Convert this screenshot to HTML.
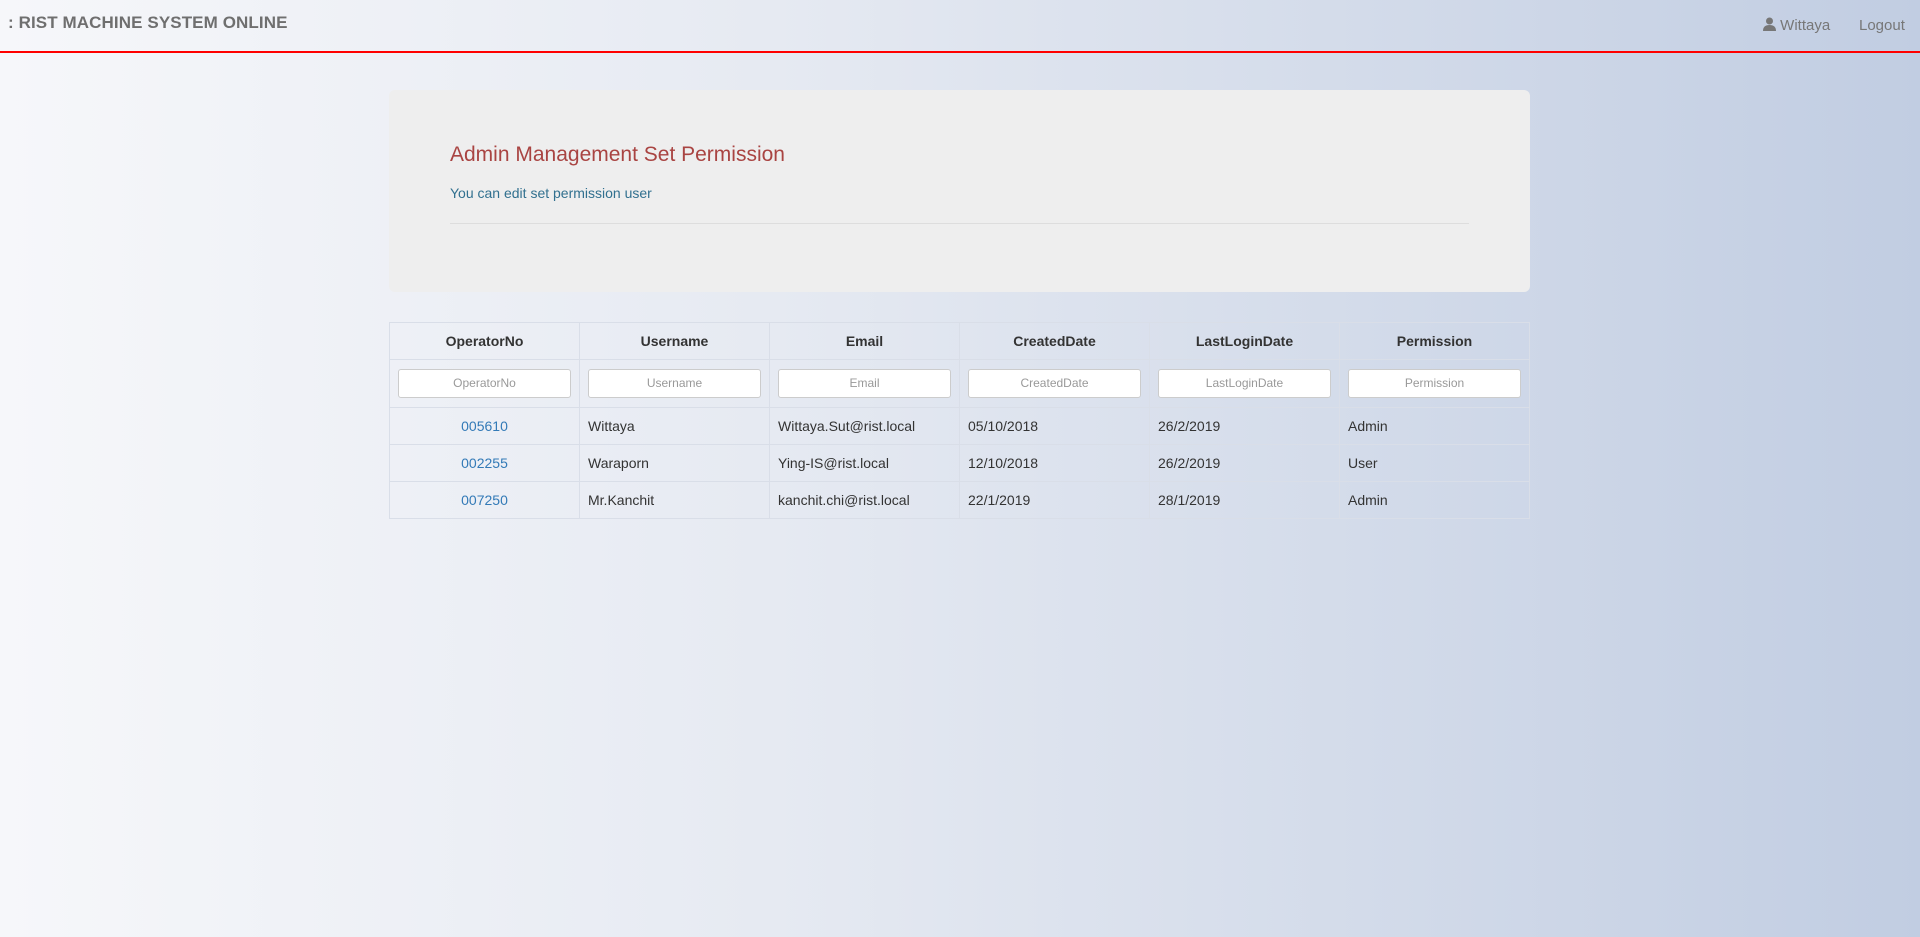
<!DOCTYPE html>
<html><head><meta charset="utf-8"><style>
*{box-sizing:border-box;margin:0;padding:0}
html,body{width:1920px;height:937px;overflow:hidden}
body{background:linear-gradient(to right,#f6f7fa 0%,#e6eaf2 40%,#c1cde2 100%);font-family:"Liberation Sans",Arial,sans-serif;color:#333;position:relative}
.nav{position:absolute;left:0;top:0;width:1920px;height:53px;border-bottom:2px solid #f00}
.brand{position:absolute;left:8px;top:13px;font-size:17px;font-weight:bold;color:#6f6f6f;letter-spacing:0.1px}
.nr{position:absolute;top:17px;font-size:15px;color:#777}
.jumbo{position:absolute;left:389px;top:90px;width:1141px;height:202px;background:#eee;border-radius:6px}
.jumbo h2{position:absolute;left:61px;top:53px;font-size:21px;font-weight:normal;color:#a94442}
.jumbo p{position:absolute;left:61px;top:95px;font-size:14px;color:#31708f}
.jumbo hr{position:absolute;left:61px;top:133px;width:1019px;border:0;border-top:1px solid #ddd}
table{position:absolute;left:389px;top:322px;width:1141px;border-collapse:collapse;table-layout:fixed}
td,th{border:1px solid #d9dee8;font-size:14px;padding:0 8px}
th{height:37px;font-weight:bold;color:#333;font-size:14px}
tr.f td{height:48px;text-align:center;padding:0 8px}
.inp{height:29px;background:#fff;border:1px solid #ccc;border-radius:3px;font-size:12px;color:#999;line-height:27px;text-align:center}
tr.d td{height:37px}
td.c{text-align:center;color:#337ab7}
</style></head><body>
<div class="nav"><div class="brand">: RIST MACHINE SYSTEM ONLINE</div>
<div class="nr" style="left:1763px"><svg width="13" height="14" viewBox="0 0 13 14" style="vertical-align:-1px"><circle cx="6.5" cy="4" r="3.5" fill="#777"/><path d="M0 14 Q0 8 6.5 8 Q13 8 13 14Z" fill="#777"/></svg> Wittaya</div>
<div class="nr" style="left:1859px">Logout</div></div>
<div class="jumbo"><h2>Admin Management Set Permission</h2><p>You can edit set permission user</p><hr></div>
<table>
<tr><th>OperatorNo</th><th>Username</th><th>Email</th><th>CreatedDate</th><th>LastLoginDate</th><th>Permission</th></tr>
<tr class="f"><td><div class="inp">OperatorNo</div></td><td><div class="inp">Username</div></td><td><div class="inp">Email</div></td><td><div class="inp">CreatedDate</div></td><td><div class="inp">LastLoginDate</div></td><td><div class="inp">Permission</div></td></tr>
<tr class="d"><td class="c">005610</td><td>Wittaya</td><td>Wittaya.Sut@rist.local</td><td>05/10/2018</td><td>26/2/2019</td><td>Admin</td></tr>
<tr class="d"><td class="c">002255</td><td>Waraporn</td><td>Ying-IS@rist.local</td><td>12/10/2018</td><td>26/2/2019</td><td>User</td></tr>
<tr class="d"><td class="c">007250</td><td>Mr.Kanchit</td><td>kanchit.chi@rist.local</td><td>22/1/2019</td><td>28/1/2019</td><td>Admin</td></tr>
</table>
</body></html>
